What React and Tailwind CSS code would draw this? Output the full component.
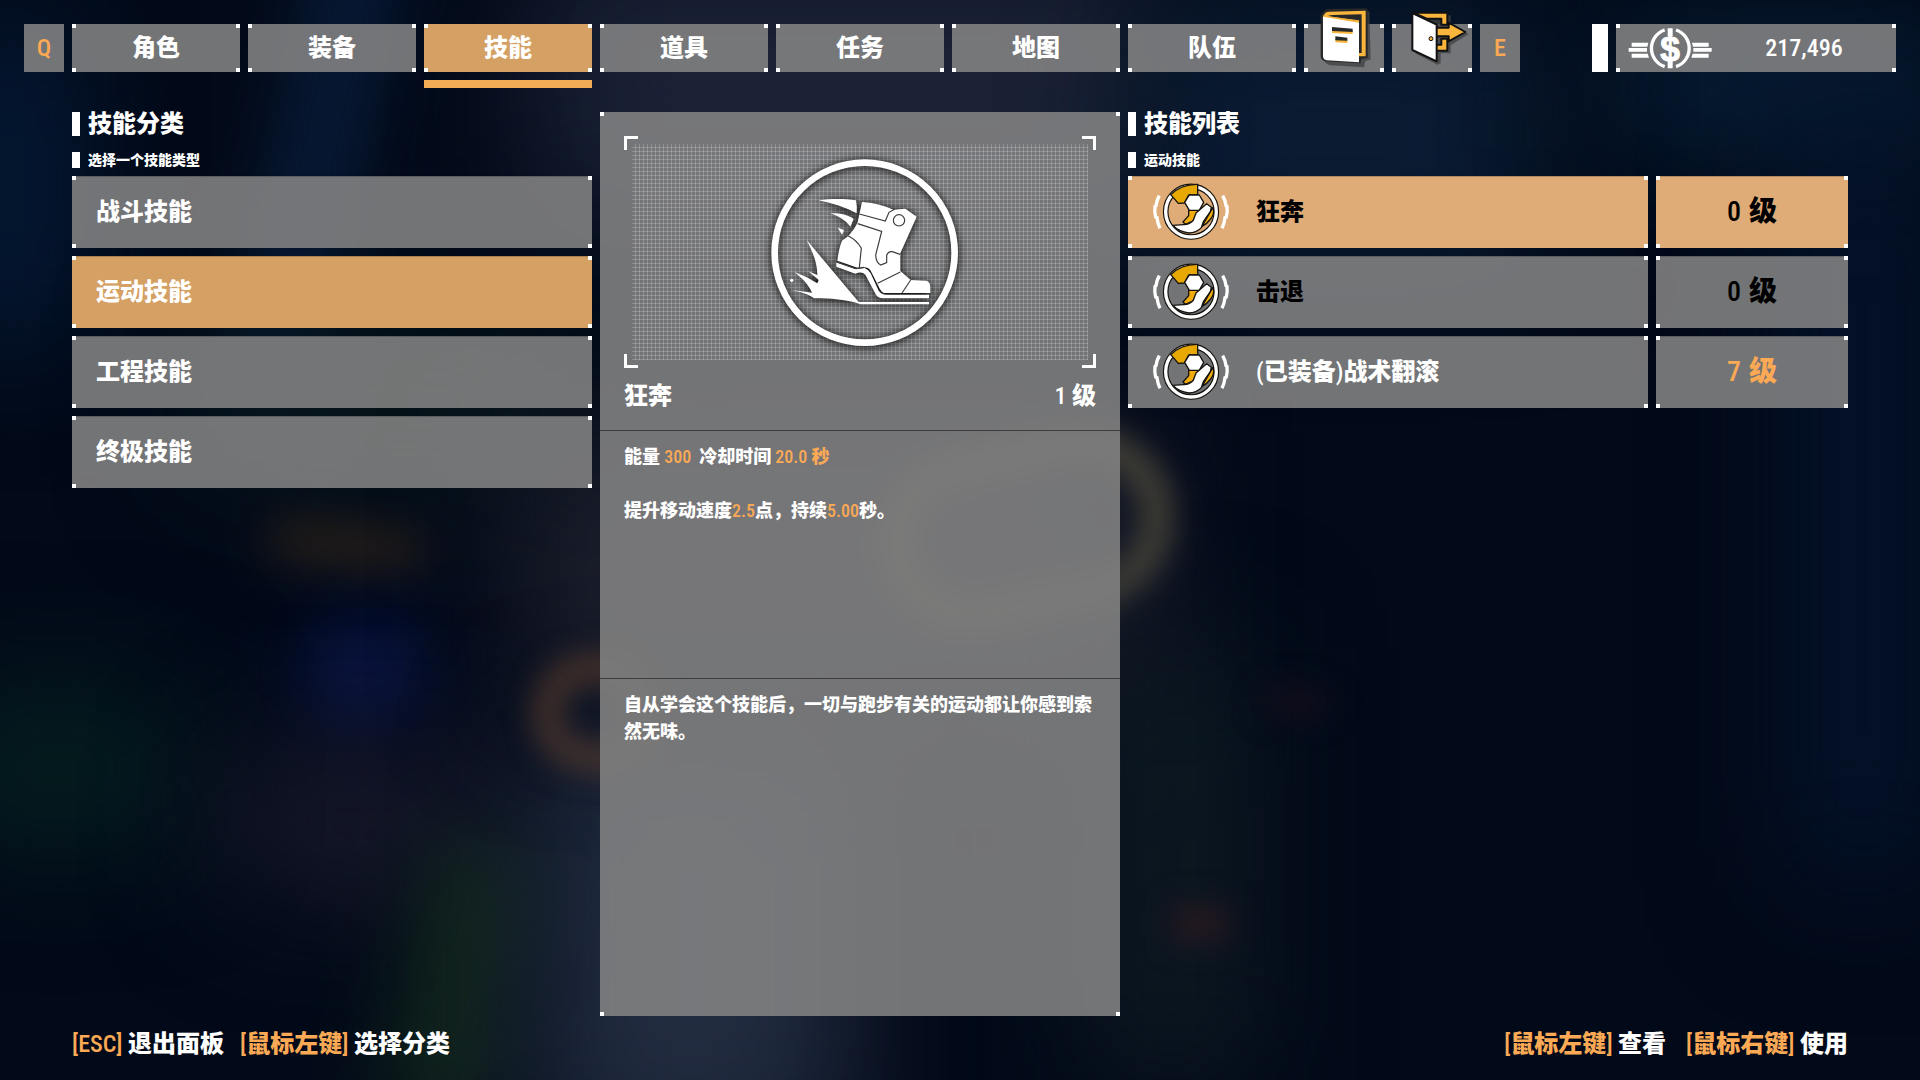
import React, { useState } from "react";

const tabs = ["角色", "装备", "技能", "道具", "任务", "地图", "队伍"];

const categories = ["战斗技能", "运动技能", "工程技能", "终极技能"];

const skills = [
  { name: "狂奔", level: 0, equipped: false },
  { name: "击退", level: 0, equipped: false },
  { name: "战术翻滚", level: 7, equipped: true },
];

function Corners() {
  return (
    <span aria-hidden="true" className="contents">
      <span className="absolute top-0 left-0 size-1 bg-white" />
      <span className="absolute top-0 right-0 size-1 bg-white" />
      <span className="absolute bottom-0 left-0 size-1 bg-white" />
      <span className="absolute right-0 bottom-0 size-1 bg-white" />
    </span>
  );
}

function Num({ children }) {
  return <span className="font-medium">{children}</span>;
}

function Backdrop() {
  return (
    <div aria-hidden="true" className="absolute inset-0 overflow-hidden bg-[#020918]">
      <span className="absolute -top-[10%] left-[15%] h-[50%] w-[3%] rotate-12 bg-[#0a2244] blur-2xl" />
      <span className="absolute top-[2%] -left-[2%] h-[30%] w-[5%] bg-[#052040] blur-3xl" />
      <span className="absolute -top-[5%] left-[28%] h-[25%] w-[32%] bg-[#1b2236] blur-3xl" />
      <span className="absolute top-0 left-[60%] h-[25%] w-[20%] bg-[#0a1c33] blur-3xl" />
      <span className="absolute top-[2%] left-[84%] h-[12%] w-[18%] bg-[#082038] blur-3xl" />
      <span className="absolute top-[12%] left-[93%] h-[70%] w-[8%] bg-[#04122a] blur-3xl" />
      <span className="absolute top-[30%] left-[10%] h-[14%] w-[20%] bg-[#061518] blur-3xl" />
      <span className="absolute top-[49%] left-[14%] h-[3%] w-[8%] rotate-6 rounded-full bg-[#33261a] blur-xl" />
      <span className="absolute top-[58%] left-[16%] h-[9%] w-[6%] -rotate-12 rounded-full bg-[#0b1650] blur-2xl" />
      <span className="absolute top-[64%] -left-[3%] h-[14%] w-[12%] bg-[#05201f] blur-3xl" />
      <span className="absolute top-[70%] left-[12%] h-[12%] w-[14%] bg-[#191a2c] blur-3xl" />
      <span className="absolute top-[78%] left-[21%] h-[26%] w-[6%] rotate-12 bg-[#10241b] blur-2xl" />
      <span className="absolute top-[68%] left-[28%] h-[40%] w-[16%] bg-[#222c40] blur-3xl" />
      <span className="absolute top-[40%] left-[27%] h-[25%] w-[33%] bg-[#1b1e2b] blur-3xl" />
      <span className="absolute top-[61%] left-[28%] h-[10%] w-[6%] rounded-full border-[16px] border-[#6b4630] blur-lg" />
      <span className="absolute top-[41%] left-[46%] h-[16%] w-[15%] -rotate-12 rounded-full border-[24px] border-[#55503f] blur-lg" />
      <span className="absolute top-[60%] left-[57%] h-[40%] w-[8%] bg-[#0e1a22] blur-3xl" />
      <span className="absolute top-[84%] left-[61%] h-[3%] w-[3%] bg-[#2a1920] blur-lg" />
      <span className="absolute top-[64%] left-[66%] h-[2%] w-[3%] bg-[#1a101e] blur-lg" />
    </div>
  );
}

function BookIcon() {
  return (
    <svg viewBox="612 0 240 216" className="absolute -top-6 left-0 h-18 w-20" aria-hidden="true">
      <path
        d="M680 38 L808 34 L812 178 L796 184 L792 202 L690 196 Q672 190 672 176 Z"
        fill="#3f4042"
        opacity=".75"
      />
      <path
        d="M672 34 Q677 27 686 27 L798 25 Q803 26 803 31 V174 L784 177 L781 190 L674 184 Q662 179 662 168 V48 Q664 40 672 34 Z"
        fill="#26282a"
      />
      <path d="M672 44 Q676 35 688 35 L797 32 V169 H776 V64 L674 49 Z" fill="#f9b53c" />
      <path d="M682 49 Q690 45 700 45 L785 43 V159 H777 V61 Z" fill="#26282a" />
      <path d="M669 46 L777 63 V71 L669 54 Z" fill="#f9b53c" />
      <path d="M669 50 L777 68 V187 L680 181 Q669 178 669 168 Z" fill="#fff" />
      <path d="M696 88 L758 92 V102 L696 99 Z M706 116 L742 119 V129 L706 127 Z" fill="#f9b53c" />
      <path d="M696 81 L758 86 V96 L696 93 Z M706 109 L742 113 V122 L706 121 Z" fill="#26282a" />
    </svg>
  );
}

function ExitIcon() {
  return (
    <svg viewBox="876 0 240 216" className="absolute -top-6 left-0 h-18 w-20" aria-hidden="true">
      <path
        d="M946 50 L1052 46 V72 L1106 102 L1052 136 V160 H1022 V190 L1012 194 L946 160 Z"
        fill="#3f4042"
        opacity=".75"
      />
      <g stroke="#111" strokeWidth="6" strokeLinejoin="round" fill="#f9b53c">
        <path d="M940 38 H1042 V74 H1024 V56 H980 Z" />
        <path d="M1042 116 V152 H1006 V134 H1024 V116 Z" />
        <path d="M1006 83 H1046 V68 L1096 96 L1046 124 V109 H1006 Z" />
        <path d="M937 39 L1010 74 V184 L937 150 Z" fill="#fff" />
        <circle cx="993" cy="116" r="6" strokeWidth="3" />
      </g>
    </svg>
  );
}

function CreditIcon() {
  return (
    <svg viewBox="202 80 252 126" className="h-[42px] w-21" aria-hidden="true">
      <g fill="none" stroke="#fff" strokeWidth="10">
        <path d="M312 89 A58 58 0 0 0 312 199" />
        <path d="M346 89 A58 58 0 0 1 346 199" />
      </g>
      <path
        d="M213 127 H263 L260 139 H213 Z M204 143 H259 V154 H204 Z M213 160 H261 L265 172 H213 Z"
        fill="#fff"
      />
      <path
        d="M444 127 H394 L397 139 H444 Z M453 143 H398 V154 H453 Z M444 160 H396 L392 172 H444 Z"
        fill="#fff"
      />
      <path d="M321 84 H336 V108 H321 Z M321 180 H336 V204 H321 Z" fill="#fff" />
      <text
        x="328"
        y="181"
        textAnchor="middle"
        fontSize="106"
        fontWeight="700"
        fill="#fff"
        stroke="#fff"
        strokeWidth="3"
        fontFamily="Liberation Sans, sans-serif"
      >
        $
      </text>
    </svg>
  );
}

function SkillIcon() {
  return (
    <svg viewBox="0 0 300 210" className="h-[70px] w-[100px] shrink-0" aria-hidden="true">
      <g fill="none" stroke="#fff" strokeWidth="10">
        <path d="M46 56 Q38 70 36 86 L33 88 Q31 106 35 120 L39 122 Q41 140 48 154" />
        <path d="M236 56 Q244 70 246 86 L249 88 Q251 106 247 120 L243 122 Q241 140 234 154" />
      </g>
      <circle cx="141" cy="104" r="76" fill="none" stroke="#15130f" strokeWidth="17" />
      <circle cx="141" cy="104" r="76" fill="none" stroke="#fff" strokeWidth="10" />
      <g stroke="#15130f" strokeWidth="4" strokeLinejoin="round">
        <path d="M80 53 Q112 21 161 22 V54 H134 L121 78 L103 79 Z" fill="#e8a804" />
        <path d="M134 99 H168 L146 132 L124 142 L117 135 L134 116 Z" fill="#f0ac0c" />
        <path d="M206 92 Q214 108 200 126 Q190 140 174 148 Z" fill="#f0ac0c" />
        <path d="M136 54 H166 L179 76 L166 100 H136 L122 76 Z" fill="#fff" />
        <path
          d="M188 80 L202 91 L199 104 L178 134 L172 152 Q158 168 134 168 Q104 164 86 145 L120 143 Q138 142 148 130 L156 108 Z"
          fill="#fff"
        />
      </g>
    </svg>
  );
}

function SprintArt() {
  return (
    <svg
      viewBox="60 36 600 600"
      className="size-50 drop-shadow-[0_1px_4px_rgba(0,0,0,1)]"
      role="img"
      aria-label="狂奔"
    >
      <circle cx="374" cy="338" r="270" fill="none" stroke="#fff" strokeWidth="20" />
      <g fill="#fff">
        <path d="M236 181 C276 175 316 176 348 181 Q352 200 350 220 C318 203 280 190 236 181 Z" />
        <path d="M270 220 C298 219 325 224 341 237 L331 260 C316 240 296 228 270 220 Z" />
        <path d="M293 263 L312 270 L306 284 Z" />
        <path d="M366 186 C400 188 432 196 460 209 Q478 207 496 206 L530 230 L481 340 V393 L512 420 L560 422 Q571 426 571 440 V459 H432 Q424 456 420 448 L392 392 Q384 382 372 382 L352 383 L292 362 Q296 326 306 302 L325 288 Q346 264 353 246 Z" />
        <path d="M289 367 L346 387 L374 384 Q385 388 392 400 L416 452 Q424 464 440 464 H567 V475 H428 Q414 474 408 464 L376 404 Q365 393 346 401 L289 380 Z" />
        <path d="M200 300 L356 486 H567 V493 H362 C320 478 270 475 222 475 C206 462 180 455 155 450 L216 458 C206 434 186 414 163 396 Q198 408 232 430 L236 420 L205 394 L232 405 C232 370 220 340 200 300 Z" />
        <circle cx="155" cy="421" r="5" />
      </g>
      <g fill="none" stroke="#3a3b3d" strokeWidth="3.5">
        <path d="M358 222 L436 243 L447 217 L465 207" />
        <path d="M353 251 L425 274 L407 345 Q408 368 422 375 L440 368 V346 Q445 333 457 335 L480 343" />
        <path d="M325 288 Q350 300 364 325 L358 383" />
        <path d="M413 430 L481 396" />
        <path d="M486 459 L512 420" />
        <path d="M289 366 L348 386 L372 382" />
        <circle cx="477" cy="241" r="17" />
      </g>
    </svg>
  );
}

function SectionTitle({ title, subtitle }) {
  return (
    <header className="mb-2 flex flex-col gap-4">
      <h2 className="flex h-6 items-center gap-2 text-2xl leading-6">
        <span className="h-6 w-2 bg-white" />
        {title}
      </h2>
      <p className="flex h-4 items-center gap-2 text-sm leading-4">
        <span className="h-4 w-2 bg-white" />
        {subtitle}
      </p>
    </header>
  );
}

function NavBar({ active, onSelect }) {
  return (
    <div className="flex h-12">
      <nav className="mr-18 flex flex-1 gap-2">
        <button className="w-10 bg-[#838383]/88 font-medium text-[#fba955]">Q</button>
        {tabs.map((tab) => (
          <button
            key={tab}
            onClick={() => onSelect(tab)}
            className={
              tab === active
                ? "relative flex-1 bg-[#d4a064]"
                : "relative flex-1 bg-[#838383]/88"
            }
          >
            {tab}
            <Corners />
            {tab === active && (
              <span className="absolute top-14 left-0 h-2 w-full bg-[#f2ac55]" />
            )}
          </button>
        ))}
        <button aria-label="图鉴" className="relative w-20 bg-[#838383]/88">
          <Corners />
          <BookIcon />
        </button>
        <button aria-label="退出" className="relative w-20 bg-[#838383]/88">
          <Corners />
          <ExitIcon />
        </button>
        <button className="w-10 bg-[#838383]/88 font-medium text-[#fba955]">E</button>
      </nav>
      <span className="mr-2 w-4 bg-white" />
      <div className="relative flex w-70 items-center bg-[#838383]/88 pl-3">
        <Corners />
        <CreditIcon />
        <span className="flex-1 text-center font-medium">217,496</span>
      </div>
    </div>
  );
}

function CategoryList({ active, onSelect }) {
  return (
    <section>
      <SectionTitle title="技能分类" subtitle="选择一个技能类型" />
      <ul className="flex flex-col gap-2">
        {categories.map((name) => (
          <li key={name}>
            <button
              onClick={() => onSelect(name)}
              className={
                name === active
                  ? "relative h-18 w-full bg-[#d4a064] px-6 text-left inset-shadow-[0_1px_0_rgba(0,0,0,0.2)]"
                  : "relative h-18 w-full bg-[#838383]/88 px-6 text-left inset-shadow-[0_1px_0_rgba(0,0,0,0.2)]"
              }
            >
              {name}
              <Corners />
            </button>
          </li>
        ))}
      </ul>
    </section>
  );
}

function SkillDetail() {
  return (
    <section className="relative flex flex-col bg-[#838383]/88">
      <Corners />
      <div className="px-6 pt-6 pb-1.5">
        <div className="relative h-58 p-2">
          <span className="absolute top-0 left-0 size-3.5 border-t-3 border-l-3 border-white" />
          <span className="absolute top-0 right-0 size-3.5 border-t-3 border-r-3 border-white" />
          <span className="absolute bottom-0 left-0 size-3.5 border-b-3 border-l-3 border-white" />
          <span className="absolute right-0 bottom-0 size-3.5 border-r-3 border-b-3 border-white" />
          <div className="flex h-full items-center justify-center bg-[repeating-linear-gradient(to_right,transparent_0_3px,rgba(255,255,255,0.2)_3px_4px),repeating-linear-gradient(to_bottom,transparent_0_3px,rgba(255,255,255,0.2)_3px_4px)]">
            <SprintArt />
          </div>
        </div>
        <div className="flex justify-between leading-14">
          <h3>狂奔</h3>
          <p>
            <Num>1</Num> 级
          </p>
        </div>
      </div>
      <div className="h-62 border-t border-[#3c3d3f] px-6 pt-3 text-lg leading-[27px]">
        <p className="mb-[27px]">
          能量 <span className="text-[#fba955]"><Num>300</Num></span>
          <span className="ml-2">冷却时间</span>{" "}
          <span className="text-[#fba955]"><Num>20.0</Num> 秒</span>
        </p>
        <p>
          提升移动速度<span className="text-[#fba955]"><Num>2.5</Num></span>点，持续
          <span className="text-[#fba955]"><Num>5.00</Num></span>秒。
        </p>
      </div>
      <p className="flex-1 border-t border-[#3c3d3f] px-6 pt-3 text-lg leading-[27px]">
        自从学会这个技能后，一切与跑步有关的运动都让你感到索然无味。
      </p>
    </section>
  );
}

function SkillRow({ skill, selected, onSelect }) {
  let bg = "bg-[#838383]/88";
  if (selected) bg = "bg-[#dfac77]";

  let levelColor = "text-black";
  if (skill.level > 0) levelColor = "text-[#fba955]";

  return (
    <li className="grid h-18 grid-cols-[520fr_192fr] gap-2">
      <button
        onClick={onSelect}
        className={`relative flex items-center gap-3 pl-4 inset-shadow-[0_1px_0_rgba(0,0,0,0.2)] ${bg} ${
          skill.equipped ? "text-white" : "text-black"
        }`}
      >
        <Corners />
        <SkillIcon />
        <span>
          {skill.equipped && (
            <>
              <Num>(</Num>已装备<Num>)</Num>
            </>
          )}
          {skill.name}
        </span>
      </button>
      <div
        className={`relative flex items-center justify-center gap-2 text-[28px] inset-shadow-[0_1px_0_rgba(0,0,0,0.2)] ${bg} ${levelColor}`}
      >
        <Corners />
        <Num>{skill.level}</Num>
        <span>级</span>
      </div>
    </li>
  );
}

function Hint({ keyName, children }) {
  return (
    <span>
      <span className="text-[#fba955]">
        <Num>[</Num>
        {keyName}
        <Num>]</Num>
      </span>{" "}
      {children}
    </span>
  );
}

export default function App() {
  const [tab, setTab] = useState("技能");
  const [category, setCategory] = useState("运动技能");
  const [skill, setSkill] = useState("狂奔");

  return (
    <div className="relative isolate min-h-screen font-['Roboto_Condensed','Noto_Sans_CJK_SC',sans-serif] text-2xl leading-8 font-black text-white">
      <Backdrop />
      <div className="relative flex min-h-screen flex-col">
        <div className="px-6 pt-6">
          <NavBar active={tab} onSelect={setTab} />
        </div>

        <main className="mt-10 grid flex-1 grid-cols-[520fr_520fr_720fr] gap-2 px-18">
          <CategoryList active={category} onSelect={setCategory} />
          <SkillDetail />
          <section>
            <SectionTitle title="技能列表" subtitle={category} />
            <ul className="flex flex-col gap-2">
              {skills.map((s) => (
                <SkillRow
                  key={s.name}
                  skill={s}
                  selected={s.name === skill}
                  onSelect={() => setSkill(s.name)}
                />
              ))}
            </ul>
          </section>
        </main>

        <footer className="mb-2 flex h-14 items-center justify-between px-18">
          <div className="flex gap-4">
            <Hint keyName={<Num>ESC</Num>}>退出面板</Hint>
            <Hint keyName="鼠标左键">选择分类</Hint>
          </div>
          <div className="flex gap-5">
            <Hint keyName="鼠标左键">查看</Hint>
            <Hint keyName="鼠标右键">使用</Hint>
          </div>
        </footer>
      </div>
    </div>
  );
}
